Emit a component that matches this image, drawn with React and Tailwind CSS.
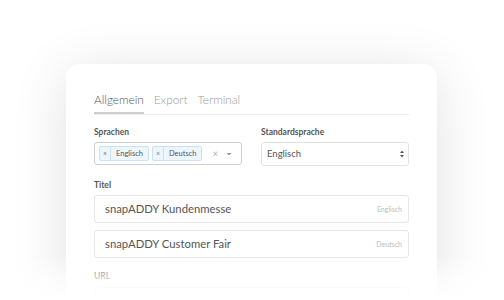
import React from "react";

function Tag({ label }) {
  return (
    <div className="flex h-[15px] items-stretch rounded-[2px] border border-[#c9e1f7] bg-[#eef6fd] text-[7.5px] text-[#555]">
      <span className="flex w-[11px] items-center justify-center border-r border-[#c9e1f7] text-[7px] text-[#777]">×</span>
      <span className="flex items-center px-[5px]">{label}</span>
    </div>
  );
}

export default function App() {
  return (
    <div
      className="relative h-[300px] w-[504px] overflow-hidden bg-white"
      style={{ fontFamily: "Lato, 'Open Sans', sans-serif" }}
    >
      <div className="absolute left-[66px] top-[64px] h-[300px] w-[371px] rounded-[14px] bg-white shadow-[0_8px_55px_rgba(0,0,0,0.12)]">
        <div className="px-[28px] pt-[28px]">
          {/* Tabs */}
          <div className="flex gap-[10px] border-b border-[#ececec] text-[11.8px] font-light leading-[16px]">
            <div className="border-b-[2px] border-[#cfcfcf] pb-[4px] text-[#555]">Allgemein</div>
            <div className="pb-[4px] text-[#9a9a9a]">Export</div>
            <div className="pb-[4px] text-[#9a9a9a]">Terminal</div>
          </div>

          {/* Row */}
          <div className="mt-[11px] flex gap-[19px]">
            <div className="w-[148px]">
              <div className="text-[8.5px] font-bold leading-[12px] text-[#555]">Sprachen</div>
              <div className="mt-[4px] flex h-[23px] items-center gap-[3px] rounded-[3px] border border-[#cfcfcf] px-[4px]">
                <Tag label="Englisch" />
                <Tag label="Deutsch" />
                <span className="ml-auto text-[9px] leading-none text-[#aaa]">×</span>
                <svg width="8" height="8" viewBox="0 0 8 8" className="ml-[4px] mr-[4px]">
                  <path d="M1.5 3 L6.5 3 L4 5.5 Z" fill="#999" />
                </svg>
              </div>
            </div>
            <div className="w-[148px]">
              <div className="text-[8.5px] font-bold leading-[12px] text-[#555]">Standardsprache</div>
              <div className="mt-[4px] flex h-[24px] items-center rounded-[3px] border border-[#e3e3e3] pl-[5px] pr-[3px] text-[9.5px] text-[#555]">
                <span>Englisch</span>
                <svg width="6" height="10" viewBox="0 0 6 10" className="ml-auto">
                  <path d="M1 4 L5 4 L3 1.5 Z" fill="#555" />
                  <path d="M1 6 L5 6 L3 8.5 Z" fill="#555" />
                </svg>
              </div>
            </div>
          </div>

          {/* Titel */}
          <div className="mt-[13px] text-[8.5px] font-bold leading-[12px] text-[#555]">Titel</div>
          <div className="mt-[4px] flex flex-col gap-[7px]">
            <div className="flex h-[28px] w-[315px] items-center rounded-[3px] border border-[#e6e6e6] pl-[10px] pr-[6px]">
              <span className="pt-[1px] text-[11.3px] text-[#555]">snapADDY Kundenmesse</span>
              <span className="ml-auto text-[7px] text-[#bbb]">Englisch</span>
            </div>
            <div className="flex h-[28px] w-[315px] items-center rounded-[3px] border border-[#e6e6e6] pl-[10px] pr-[6px]">
              <span className="pt-[1px] text-[11.3px] text-[#555]">snapADDY Customer Fair</span>
              <span className="ml-auto text-[7px] text-[#bbb]">Deutsch</span>
            </div>
          </div>

          {/* URL */}
          <div className="mt-[12px] text-[8.5px] font-bold leading-[12px] text-[#555]">URL</div>
          <div className="mt-[5px] h-[28px] w-[315px] rounded-[3px] border border-[#e6e6e6]" />
        </div>
      </div>
      <div className="pointer-events-none absolute bottom-0 left-0 h-[45px] w-full bg-gradient-to-b from-white/0 via-white/70 to-white" />
    </div>
  );
}
